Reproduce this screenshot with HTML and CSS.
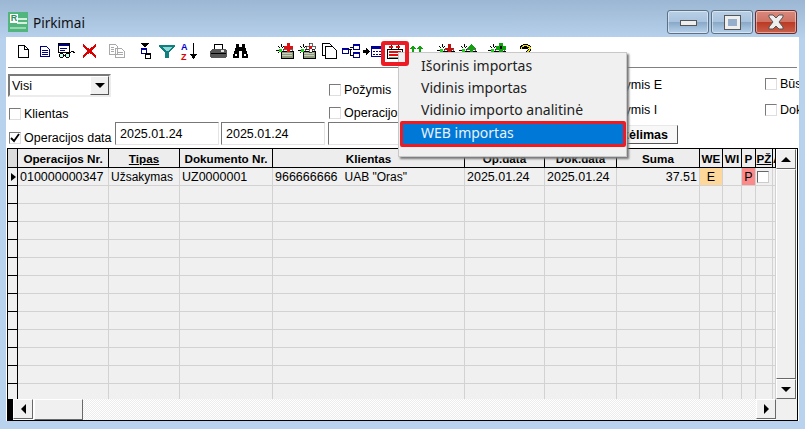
FILE: index.html
```html
<!DOCTYPE html>
<html lang="lt">
<head>
    <meta charset="UTF-8">
    <title>Pirkimai</title>
    <link rel="stylesheet" href="styles.css">
</head>
<body>
    <svg class="defs" width="0" height="0">
        <symbol id="tray" viewBox="0 0 18 16">
            <path d="M5 8h12v7H5z" fill="#8f9a7c" stroke="#000"/>
            <path d="M6 10h10v1H6zM6 12h10v1H6z" fill="#c9cfc0"/>
            <path d="M7 6h9v2H7z" fill="#fff" stroke="#000" stroke-width=".6"/>
            <path d="M2 3l2 2M5 1v3M8 3L6 5M0 7h3M2 10l2-2" stroke="#000" fill="none"/>
            <path d="M3 6h3v3H3z" fill="#19d219"/>
        </symbol>
    </svg>

    <div class="window">
        <div class="titlebar">
            <div class="app-icon"><span>R</span></div>
            <div class="title">Pirkimai</div>
            <div class="win-buttons">
                <div class="win-btn"><span class="glyph-min"></span></div>
                <div class="win-btn"><span class="glyph-max"></span></div>
                <div class="win-btn close">
                    <svg width="20" height="16" viewBox="0 0 20 16"><path d="M3 1h4l3 3 3-3h4v2l-4 5 4 5v2h-4l-3-3-3 3H3v-2l4-5-4-5z" fill="#eee" stroke="#555"/></svg>
                </div>
            </div>
        </div>

        <div class="client">
            <!-- toolbar -->
            <div class="toolbar">
                <span class="tool">
                    <svg width="13" height="15" viewBox="0 0 13 15"><path d="M1.5 1.5h6l4 4v8h-10zM7.5 1.5v4h4" fill="#fff" stroke="#000"/></svg>
                </span>
                <span class="tool">
                    <svg width="12" height="13" viewBox="0 0 12 13"><path d="M1.5 1.5h6l3 3v7h-9z" fill="#fff" stroke="#00007f"/><path d="M3 5h6M3 7h6M3 9h6" stroke="#00007f"/></svg>
                </span>
                <span class="tool">
                    <svg width="18" height="16" viewBox="0 0 18 16"><path d="M.5 .5h11v9H.5z" fill="#fff" stroke="#000"/><path d="M1 1h10v2H1z" fill="#00007f"/><path d="M2 5h7M2 7h5" stroke="#00007f"/><circle cx="3.5" cy="12.5" r="2" fill="#bfe" stroke="#000"/><circle cx="9.5" cy="12.5" r="2" fill="#bfe" stroke="#000"/><path d="M5.5 12h2M11 11l3-3 3 2" stroke="#000" fill="none"/></svg>
                </span>
                <span class="tool">
                    <svg width="15" height="14" viewBox="0 0 15 14"><path d="M1 1l13 12M14 1L1 13" stroke="#d80000" stroke-width="2.4"/></svg>
                </span>
                <span class="tool gap-a">
                    <svg width="16" height="14" viewBox="0 0 16 14"><path d="M.5 .5h6l2 2v8h-8zM6.5 4.5h6l3 3v6h-9z" fill="#fff" stroke="#a9a9a9"/><path d="M8 8h6M8 10h6M2 3h3M2 5h3M2 7h3" stroke="#a9a9a9"/></svg>
                </span>
                <span class="tool gap-a">
                    <svg width="11" height="16" viewBox="0 0 11 16"><path d="M0 0h10L5 4z" fill="#000"/><path d="M1 5.500h5v5H1z" fill="#fff" stroke="#00007f"/><path d="M1 6h5v1H1z" fill="#00c"/><path d="M5 10.500h5v5H5z" fill="#fff" stroke="#000"/><path d="M5 11h5v1H5z" fill="#000"/></svg>
                </span>
                <span class="tool">
                    <svg width="16" height="13" viewBox="0 0 16 13"><path d="M0 0h16v2l-6 5v6H6V7L0 2z" fill="#0f7f7f"/><path d="M3 2h10L9 6H7z" fill="#8fd8d8"/></svg>
                </span>
                <span class="tool">
                    <svg width="16" height="17" viewBox="0 0 16 17"><text x="0" y="7" class="az-a">A</text><text x="0" y="17" class="az-z">Z</text><path d="M12 0v12" stroke="#000"/><path d="M9 11h7l-3.500 5z" fill="#000"/></svg>
                </span>
                <span class="tool gap-b">
                    <svg width="17" height="15" viewBox="0 0 17 15"><path d="M4 .5h8l1 5H4z" fill="#fff" stroke="#000"/><path d="M0 7l2-2h13l2 2v6l-2 1H1l-1-1z" fill="#555"/><path d="M1 9h15v1H1z" fill="#000"/><path d="M11 6h3v2h-3z" fill="#ddd"/></svg>
                </span>
                <span class="tool">
                    <svg width="15" height="14" viewBox="0 0 15 14"><path d="M3 0h3v3h3V0h3v3l3 8v3H9V7H6v7H0v-3l3-8z" fill="#000"/><path d="M2 10h2v2H2zM11 10h2v2h-2z" fill="#fff"/></svg>
                </span>
                <span class="tool gap-c">
                    <svg width="18" height="16"><use href="#tray"/><path d="M11 0h3v3h3v3h-3v3h-3V6H8V3h3z" fill="#e01010"/></svg>
                </span>
                <span class="tool">
                    <svg width="18" height="16"><use href="#tray"/><path d="M11 0h3v3h3v3h-3v3h-3V6H8V3h3z" fill="#fff" stroke="#000" stroke-width=".6"/><path d="M11 3h3v3h-3z" fill="#e01010"/></svg>
                </span>
                <span class="tool">
                    <svg width="15" height="16" viewBox="0 0 15 16"><path d="M3.500 3.500h7l4 4v8h-11z" fill="#fff" stroke="#000"/><path d="M.5 .5h7l3 3h-7v9h-3z" fill="#fff" stroke="#000"/></svg>
                </span>
                <span class="tool">
                    <svg width="18" height="14" viewBox="0 0 18 14"><path d="M6 5h4M8 5v6h3M8 3h3" stroke="#000" fill="none"/><path d="M.5 4.500h6v5h-6zM11.500 .5h6v5h-6zM11.500 8.500h6v5h-6z" fill="#fff" stroke="#00007f"/><path d="M1 5h5v1H1zM12 1h5v1h-5zM12 9h5v1h-5z" fill="#00c"/></svg>
                </span>
                <span class="tool">
                    <svg width="20" height="13" viewBox="0 0 20 13"><path d="M0 5h3V2l4 4.500L3 11V8H0z" fill="#000"/><path d="M8.500 1.500h11v10h-11z" fill="#fff" stroke="#00007f"/><path d="M9 2h10v2H9z" fill="#00a"/><path d="M10 6h2v1h-2zM13 6h2v1h-2zM16 6h2v1h-2zM10 9h2v1h-2zM13 9h2v1h-2zM16 9h2v1h-2z" fill="#00007f"/></svg>
                </span>
                <span class="tool">
                    <svg width="16" height="15" viewBox="0 0 16 15"><path d="M.5 5.500h15v9H.5z" fill="#fff" stroke="#000"/><path d="M2 7h12v2H2zM2 10h12v2H2z" fill="#e01010"/><path d="M2 13h12v1H2z" fill="#8f9a7c"/><path d="M4 1v4M11 1v4" stroke="#000"/><path d="M2 3h4M9 3h4" stroke="#c01010" stroke-width="1.500"/></svg>
                </span>
                <span class="tool">
                    <svg width="16" height="14" viewBox="0 0 16 14"><path d="M1 9h14v5H1z" fill="#8f9a7c" stroke="#000"/><path d="M4 1l3 4H5v4H3V5H1zM11 1l3 4h-2v4h-2V5H8z" fill="#10a010"/></svg>
                </span>
                <span class="tool gap-d">
                    <svg width="18" height="16"><use href="#tray"/><path d="M11 1h3v4h3l-4.500 5L8 5h3z" fill="#c01010"/></svg>
                </span>
                <span class="tool">
                    <svg width="18" height="16"><use href="#tray"/><path d="M12.500 1L17 6h-3v4h-3V6H8z" fill="#10a010"/></svg>
                </span>
                <span class="tool gap-d">
                    <svg width="18" height="16"><use href="#tray"/><path d="M11 0h4v3h3v4h-3v3h-4V7H8V3h3z" fill="#10a010"/><path d="M12 3h2v3h-2z" fill="#000"/></svg>
                </span>
                <span class="tool gap-e">
                    <svg width="13" height="13" viewBox="0 0 13 13"><path d="M2 4c0-5 10-4 9 0-1 3-4 3-4 6M5 4c1-2 3-1 3 0" fill="none" stroke="#000" stroke-width="2.800"/><path d="M2 4c0-5 10-4 9 0-1 3-4 3-4 6" fill="none" stroke="#f2e200" stroke-width="1.200"/><path d="M5 11h3v2H5z" fill="#000"/></svg>
                </span>
            </div>

            <!-- filtrai -->
            <div class="filters">
                <div class="col-main">
                    <div class="combo">
                        <span class="combo-text">Visi</span>
                        <span class="combo-btn"><i class="arrow-down"></i></span>
                    </div>
                    <label class="check klientas"><span class="box"></span>Klientas</label>
                    <div class="date-row">
                        <label class="check"><span class="box"><svg width="10" height="10" viewBox="0 0 10 10"><path d="M1 5l3 3 5-7" fill="none" stroke="#000" stroke-width="1.800"/></svg></span>Operacijos data</label>
                        <div class="field">2025.01.24</div>
                        <div class="field">2025.01.24</div>
                    </div>
                </div>
                <div class="col-mid">
                    <label class="check pozymis"><span class="box"></span>Požymis</label>
                    <label class="check operacijos"><span class="box"></span>Operacijos</label>
                    <div class="field wide"></div>
                </div>
                <div class="col-flags">
                    <label class="check flag-e"><span class="box"></span>Požymis E</label>
                    <label class="check flag-i"><span class="box"></span>Požymis I</label>
                    <div class="push-btn">Perkėlimas</div>
                </div>
                <div class="col-right">
                    <label class="check"><span class="box"></span>Būs</label>
                    <label class="check"><span class="box"></span>Dok</label>
                </div>
            </div>

            <!-- lentele -->
            <div class="grid">
                <div class="grid-main">
                    <div class="grid-view">
                        <table>
                            <colgroup>
                                <col class="c-ind"><col class="c-nr"><col class="c-tip"><col class="c-dok"><col class="c-kl"><col class="c-op"><col class="c-dd"><col class="c-sum"><col class="c-we"><col class="c-wi"><col class="c-p"><col class="c-pz"><col class="c-a">
                            </colgroup>
                            <thead>
                                <tr><th></th><th>Operacijos Nr.</th><th><u>Tipas</u></th><th>Dokumento Nr.</th><th>Klientas</th><th>Op.data</th><th>Dok.data</th><th>Suma</th><th>WE</th><th>WI</th><th>P</th><th><u>PŽ</u></th><th>A</th></tr>
                            </thead>
                            <tbody>
                                <tr><th><i class="pointer"></i></th><td>010000000347</td><td class="name">Užsakymas</td><td>UZ0000001</td><td class="client-cell">966666666&nbsp; <span class="name">UAB "Oras"</span></td><td>2025.01.24</td><td>2025.01.24</td><td class="num">37.51</td><td class="mark-e">E</td><td></td><td class="mark-p">P</td><td class="box-cell"><span class="box plain"></span></td><td></td></tr>
                                <tr><th></th><td></td><td></td><td></td><td></td><td></td><td></td><td></td><td></td><td></td><td></td><td></td><td></td></tr>
                                <tr><th></th><td></td><td></td><td></td><td></td><td></td><td></td><td></td><td></td><td></td><td></td><td></td><td></td></tr>
                                <tr><th></th><td></td><td></td><td></td><td></td><td></td><td></td><td></td><td></td><td></td><td></td><td></td><td></td></tr>
                                <tr><th></th><td></td><td></td><td></td><td></td><td></td><td></td><td></td><td></td><td></td><td></td><td></td><td></td></tr>
                                <tr><th></th><td></td><td></td><td></td><td></td><td></td><td></td><td></td><td></td><td></td><td></td><td></td><td></td></tr>
                                <tr><th></th><td></td><td></td><td></td><td></td><td></td><td></td><td></td><td></td><td></td><td></td><td></td><td></td></tr>
                                <tr><th></th><td></td><td></td><td></td><td></td><td></td><td></td><td></td><td></td><td></td><td></td><td></td><td></td></tr>
                                <tr><th></th><td></td><td></td><td></td><td></td><td></td><td></td><td></td><td></td><td></td><td></td><td></td><td></td></tr>
                                <tr><th></th><td></td><td></td><td></td><td></td><td></td><td></td><td></td><td></td><td></td><td></td><td></td><td></td></tr>
                                <tr><th></th><td></td><td></td><td></td><td></td><td></td><td></td><td></td><td></td><td></td><td></td><td></td><td></td></tr>
                                <tr><th></th><td></td><td></td><td></td><td></td><td></td><td></td><td></td><td></td><td></td><td></td><td></td><td></td></tr>
                                <tr><th></th><td></td><td></td><td></td><td></td><td></td><td></td><td></td><td></td><td></td><td></td><td></td><td></td></tr>
                            </tbody>
                        </table>
                    </div>
                    <div class="vscroll">
                        <div class="sb-btn"><i class="arrow-up"></i></div>
                        <div class="sb-thumb"></div>
                        <div class="sb-btn"><i class="arrow-down"></i></div>
                    </div>
                </div>
                <div class="hscroll">
                    <div class="hs-start"></div>
                    <div class="sb-btn"><i class="arrow-left"></i></div>
                    <div class="hs-thumb"></div>
                    <div class="hs-track"></div>
                    <div class="sb-btn"><i class="arrow-right"></i></div>
                    <div class="hs-corner"></div>
                </div>
            </div>
        </div>

        <!-- atidarytas meniu -->
        <div class="menu">
            <div class="menu-item">Išorinis importas</div>
            <div class="menu-item">Vidinis importas</div>
            <div class="menu-item">Vidinio importo analitinė</div>
            <div class="menu-item active">WEB importas</div>
        </div>
        <div class="tool-mark"></div>
    </div>
</body>
</html>
```

FILE: styles.css
```css
:root {
    --face: #f0f0f0;
    --line: #d2d2d2;
    --red: #ed1c24;
}

* {
    margin: 0;
    padding: 0;
    box-sizing: border-box;
}

html, body {
    width: 805px;
    height: 429px;
    overflow: hidden;
}

body {
    font-family: "Liberation Sans", Arial, sans-serif;
    font-size: 12.5px;
    color: #000;
}

.defs {
    position: absolute;
}

.window {
    position: relative;
    width: 805px;
    height: 429px;
    background: linear-gradient(#9cb7d3 0, #b8d2ed 40px, #b9d2ed 100%);
}

/* title bar */
.titlebar {
    display: flex;
    height: 37px;
    padding-left: 8px;
}

.app-icon {
    width: 20px;
    height: 20px;
    margin-top: 12px;
    background: #50b67e;
    background-image: linear-gradient(#d8efe0, #d8efe0), linear-gradient(#d8efe0, #d8efe0), linear-gradient(#9bd6b2, #9bd6b2);
    background-size: 10px 2px, 10px 2px, 16px 2px;
    background-position: 9px 6px, 9px 10px, 2px 15px;
    background-repeat: no-repeat;
}

.app-icon span {
    display: block;
    width: 8px;
    height: 9px;
    margin: 2px 0 0 2px;
    background: #fff;
    color: #2e8f5a;
    font-size: 9px;
    font-weight: bold;
    line-height: 9px;
    text-align: center;
}

.title {
    margin: 13px 0 0 5px;
    font-family: "Noto Sans", sans-serif;
    font-size: 13.6px;
    line-height: 19px;
    color: #111;
}

.win-buttons {
    display: flex;
    gap: 2px;
    margin: 10px 8px 0 auto;
}

.win-btn {
    display: flex;
    align-items: center;
    justify-content: center;
    width: 42px;
    height: 24px;
    border: 1px solid #5a7186;
    border-radius: 3px;
    background: linear-gradient(#b9cfe6 0, #a9c3de 48%, #8aa9c8 52%, #b6d0ea 100%);
    box-shadow: inset 0 0 0 1px rgba(255, 255, 255, 0.45);
}

.win-btn.close {
    border-color: #6b2a2a;
    background: linear-gradient(#d9897c 0, #cf7364 48%, #bb3a24 52%, #c9604a 100%);
}

.glyph-min {
    width: 17px;
    height: 6px;
    margin-top: 2px;
    background: #eee;
    border: 1px solid #555;
}

.glyph-max {
    width: 17px;
    height: 15px;
    border: 4px solid #eee;
    outline: 1px solid #555;
    outline-offset: -1px;
    background: #94aecb;
}

/* client area */
.client {
    width: 793px;
    height: 384px;
    margin-left: 6px;
    background: #fff;
}

.toolbar {
    display: flex;
    align-items: center;
    height: 31px;
    margin: 0 2px;
    padding: 0 0 2px 4px;
    border-bottom: 1px solid #808080;
}

.tool {
    display: flex;
    align-items: center;
    justify-content: center;
    flex: none;
    width: 22px;
    height: 18px;
}

.tool svg {
    shape-rendering: crispEdges;
    overflow: visible;
}

.gap-a { margin-left: 6px; }
.gap-b { margin-left: 7px; }
.gap-c { margin-left: 23px; }
.gap-d { margin-left: 7px; }
.gap-e { margin-left: 6px; }

.az-a, .az-z {
    font-family: "Liberation Sans", sans-serif;
    font-size: 9px;
    font-weight: bold;
}

.az-a { fill: #0000d0; }
.az-z { fill: #e00000; }

/* filters */
.filters {
    display: flex;
    height: 80px;
    overflow: hidden;
}

.col-main {
    width: 322px;
    flex: none;
    padding: 6px 0 0 2px;
}

.col-mid {
    width: 256px;
    flex: none;
}

.col-flags {
    width: 181px;
    flex: none;
}

.col-right {
    flex: 1;
    min-width: 0;
    padding-top: 8px;
    overflow: hidden;
    white-space: nowrap;
}

.combo {
    display: flex;
    align-items: center;
    justify-content: space-between;
    width: 103px;
    height: 23px;
    padding: 0 0 0 2px;
    border: 2px solid;
    border-color: #7a7a7a #ececec #ececec #7a7a7a;
}

.combo-btn {
    display: flex;
    align-items: center;
    justify-content: center;
    width: 19px;
    height: 19px;
    background: var(--face);
    border: 1px solid;
    border-color: #fff #555 #555 #fff;
}

.check {
    display: flex;
    align-items: center;
    gap: 3px;
    height: 16px;
    white-space: nowrap;
}

.box {
    display: inline-flex;
    align-items: center;
    justify-content: center;
    flex: none;
    width: 12px;
    height: 12px;
    background: #fff;
    border: 1px solid;
    border-color: #7a7a7a #dedede #dedede #7a7a7a;
}

.box.plain {
    border-color: #666 #ccc #ccc #666;
}

.klientas {
    margin: 9px 0 0 1px;
}

.date-row {
    display: flex;
    align-items: flex-end;
}

.date-row .check {
    width: 106px;
    margin: 0 0 -1px 1px;
}

.field {
    width: 104px;
    height: 23px;
    margin-right: 2px;
    padding: 3px 0 0 4px;
    line-height: 16px;
    background: #fff;
    border: 1px solid;
    border-color: #777 #e4e4e4 #e4e4e4 #777;
}

.field.wide {
    width: 200px;
    margin-top: 1px;
}

.col-mid .check {
    margin-left: 1px;
}

.pozymis {
    margin-top: 14px;
}

.operacijos {
    margin-top: 7px;
}

.flag-e {
    margin-top: 9px;
}

.flag-i {
    margin-top: 9px;
}

.push-btn {
    width: 94px;
    height: 19px;
    margin-top: 7px;
    padding-right: 9px;
    font-weight: bold;
    line-height: 18px;
    text-align: right;
    background: #f8f8f8;
    border: 1px solid;
    border-color: #e8e8e8 #555 #555 #e8e8e8;
}

.col-right .check + .check {
    margin-top: 10px;
}

.flag-e, .flag-i {
    margin-left: 4px;
}

/* grid */
.grid {
    width: 791px;
    height: 273px;
    margin-left: 1px;
    border: 1px solid #000;
    background: #fff;
}

.grid-main {
    display: flex;
    height: 250px;
}

.grid-view {
    width: 768px;
    height: 250px;
    overflow: hidden;
    background: var(--face);
}

table {
    width: 768px;
    table-layout: fixed;
    border-collapse: separate;
    border-spacing: 0;
}

.c-ind { width: 10px; }
.c-nr { width: 91px; }
.c-tip { width: 71px; }
.c-dok { width: 93px; }
.c-kl { width: 192px; }
.c-op { width: 80px; }
.c-dd { width: 72px; }
.c-sum { width: 83px; }
.c-we { width: 23px; }
.c-wi { width: 19px; }
.c-p { width: 14px; }
.c-pz { width: 17px; }
.c-a { width: 3px; }

th, td {
    height: 18px;
    overflow: hidden;
    white-space: nowrap;
    background: var(--face);
    border-right: 1px solid var(--line);
    border-bottom: 1px solid var(--line);
}

td {
    padding: 1px 0 0 2px;
    line-height: 15px;
}

.name {
    font-size: 12px;
}

thead th {
    height: 19px;
    padding-top: 1px;
    font-size: 11.7px;
    font-weight: bold;
    text-align: center;
    border-color: #000;
    background: #ededed;
}

thead th:first-child {
    background: #dcdcdc;
}

tbody th {
    border-right-color: #000;
    border-bottom-color: #000;
}

tbody th:first-child {
    padding: 0 0 0 3px;
    text-align: left;
}

.pointer {
    display: block;
    width: 0;
    height: 0;
    border-style: solid;
    border-width: 4px 0 4px 5px;
    border-color: transparent transparent transparent #000;
}

.client-cell {
    padding-left: 2px;
}

td.num {
    padding-right: 2px;
    text-align: right;
}

.mark-e {
    background: #fdd89a;
    text-align: center;
    padding-left: 0;
}

.mark-p {
    background: #fb8a8a;
    text-align: center;
    padding-left: 0;
}

.box-cell {
    padding: 0 0 0 1px;
}

.box-cell .box {
    display: block;
}

/* scrollbars */
.vscroll {
    display: flex;
    flex-direction: column;
    width: 20px;
    flex: none;
}

.sb-btn, .sb-thumb, .hs-thumb {
    background: var(--face);
    border: 1px solid;
    border-color: #fff #696969 #696969 #fff;
}

.sb-btn {
    display: flex;
    align-items: center;
    justify-content: center;
    flex: none;
    width: 20px;
    height: 20px;
}

.sb-thumb {
    flex: 1;
}

.hscroll {
    display: flex;
    height: 21px;
}

.hs-start {
    width: 5px;
    background: #000;
}

.hs-thumb {
    width: 49px;
    margin-left: 1px;
}

.hs-track {
    width: 673px;
    background-color: #fff;
    background-image: repeating-conic-gradient(#ececec 0 25%, #fff 0 50%);
    background-size: 2px 2px;
}

.hs-corner {
    flex: 1;
    background: var(--face);
}

.arrow-down, .arrow-up, .arrow-left, .arrow-right {
    display: block;
    width: 0;
    height: 0;
    border-style: solid;
}

.arrow-down {
    border-width: 5px 5px 0;
    border-color: #000 transparent transparent;
}

.arrow-up {
    border-width: 0 5px 5px;
    border-color: transparent transparent #000;
}

.arrow-left {
    border-width: 5px 5px 5px 0;
    border-color: transparent #000 transparent transparent;
}

.arrow-right {
    border-width: 5px 0 5px 5px;
    border-color: transparent transparent transparent #000;
}

/* popup menu and the red marks over the screen */
.menu {
    position: absolute;
    left: 398px;
    top: 52px;
    width: 229px;
    height: 105px;
    padding: 2px 4px 0;
    font-family: "Noto Sans", sans-serif;
    font-size: 14px;
    background: var(--face);
    border: 1px solid #c8c8c8;
    box-shadow: 2px 2px 2px #777;
}

.menu-item {
    height: 22px;
    padding-left: 18px;
    line-height: 21px;
    color: #222;
}

.menu-item.active {
    width: 226px;
    height: 26px;
    margin: 0 0 0 -3px;
    padding-left: 18px;
    line-height: 18px;
    color: #e8f2fb;
    background: #0078d7;
    border: 3px solid var(--red);
    border-radius: 2px;
}

.tool-mark {
    position: absolute;
    left: 381px;
    top: 41px;
    width: 28px;
    height: 25px;
    border: 4px solid var(--red);
    border-radius: 3px;
}
```
